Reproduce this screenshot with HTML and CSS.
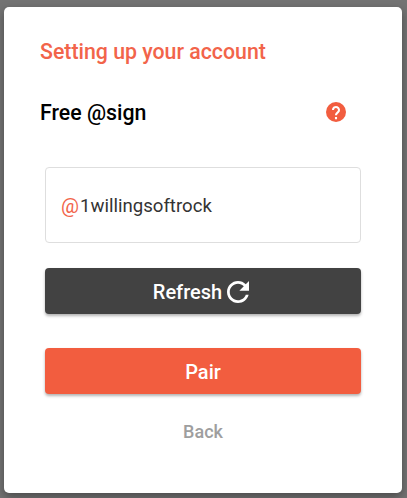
FILE: index.html
```html
<!DOCTYPE html>
<html lang="en">
<head>
<meta charset="utf-8">
<title>Setting up your account</title>
<link rel="stylesheet" href="styles.css">
</head>
<body>
<main class="dialog">
  <h1 class="title">Setting up your account</h1>
  <div class="heading">
    <h2 class="subtitle">Free @sign</h2>
    <svg class="help" viewBox="0 0 20 20"><circle cx="10" cy="10" r="10"/><path class="mark" d="M7 8a3 3 0 1 1 5.100 2.100L10.900 11.300Q10 12.200 10 13.300M10 15v2.200"/></svg>
  </div>
  <div class="field"><span class="at">@</span><span>1willingsoftrock</span></div>
  <button class="button refresh"><span>Refresh</span><svg class="reload" viewBox="4 4 16 16"><path d="M17.650 6.350C16.200 4.900 14.210 4 12 4c-4.420 0-7.990 3.580-7.990 8s3.570 8 7.990 8c3.730 0 6.840-2.550 7.730-6h-2.080c-.82 2.330-3.040 4-5.650 4-3.310 0-6-2.690-6-6s2.690-6 6-6c1.660 0 3.140.69 4.220 1.780L13 11h7V4l-2.350 2.350z"/></svg></button>
  <button class="button pair">Pair</button>
  <button class="back">Back</button>
</main>
</body>
</html>
```
FILE: styles.css
```css
* { box-sizing: border-box; }
body {
  margin: 0;
  height: 498px;
  padding: 7px 5px 5px 4px;
  background: #737373;
  font-family: Roboto, sans-serif;
  overflow: hidden;
}
.dialog {
  height: 486px;
  padding: 32px 41px 0;
  background: #fff;
  border-radius: 5px;
  box-shadow: 0 4px 10px rgba(0, 0, 0, .35);
  display: flex;
  flex-direction: column;
}
.title, .subtitle { margin: 0; font-weight: 500; white-space: nowrap; }
.title { margin-left: -5px; font-size: 21.3px; line-height: 26px; color: #f2644a; }
.heading {
  display: flex;
  align-items: center;
  justify-content: space-between;
  height: 26px;
  margin: 34px 15px 0 -5px;
}
.subtitle { font-size: 21.3px; color: #000; }
.help { width: 20px; height: 20px; fill: #f25d3f; }
.mark { fill: none; stroke: #fff; stroke-width: 2.1; }
.field {
  display: flex;
  align-items: center;
  height: 76px;
  margin-top: 42px;
  padding: 2px 0 0 15px;
  border: 1px solid #dedede;
  border-radius: 4px;
  font-size: 18.6px;
  color: #333;
}
.at { margin-right: 1px; font-size: 20px; color: #f2644a; }
.button {
  display: flex;
  align-items: center;
  justify-content: center;
  height: 46px;
  padding: 2px 0 0;
  border: 0;
  border-radius: 4px;
  color: #fff;
  font: 500 20px Roboto, sans-serif;
  box-shadow: 0 2px 3px rgba(0, 0, 0, .3);
}
.refresh { margin-top: 25px; padding-right: 4px; gap: 5px; background: #424242; }
.reload { width: 22px; height: 22px; fill: #fff; }
.pair { margin-top: 34px; background: #f25d3f; }
.back {
  align-self: center;
  margin-top: 26px;
  padding: 0;
  border: 0;
  background: none;
  color: #9e9e9e;
  font: 500 18px/24px Roboto, sans-serif;
}
```
